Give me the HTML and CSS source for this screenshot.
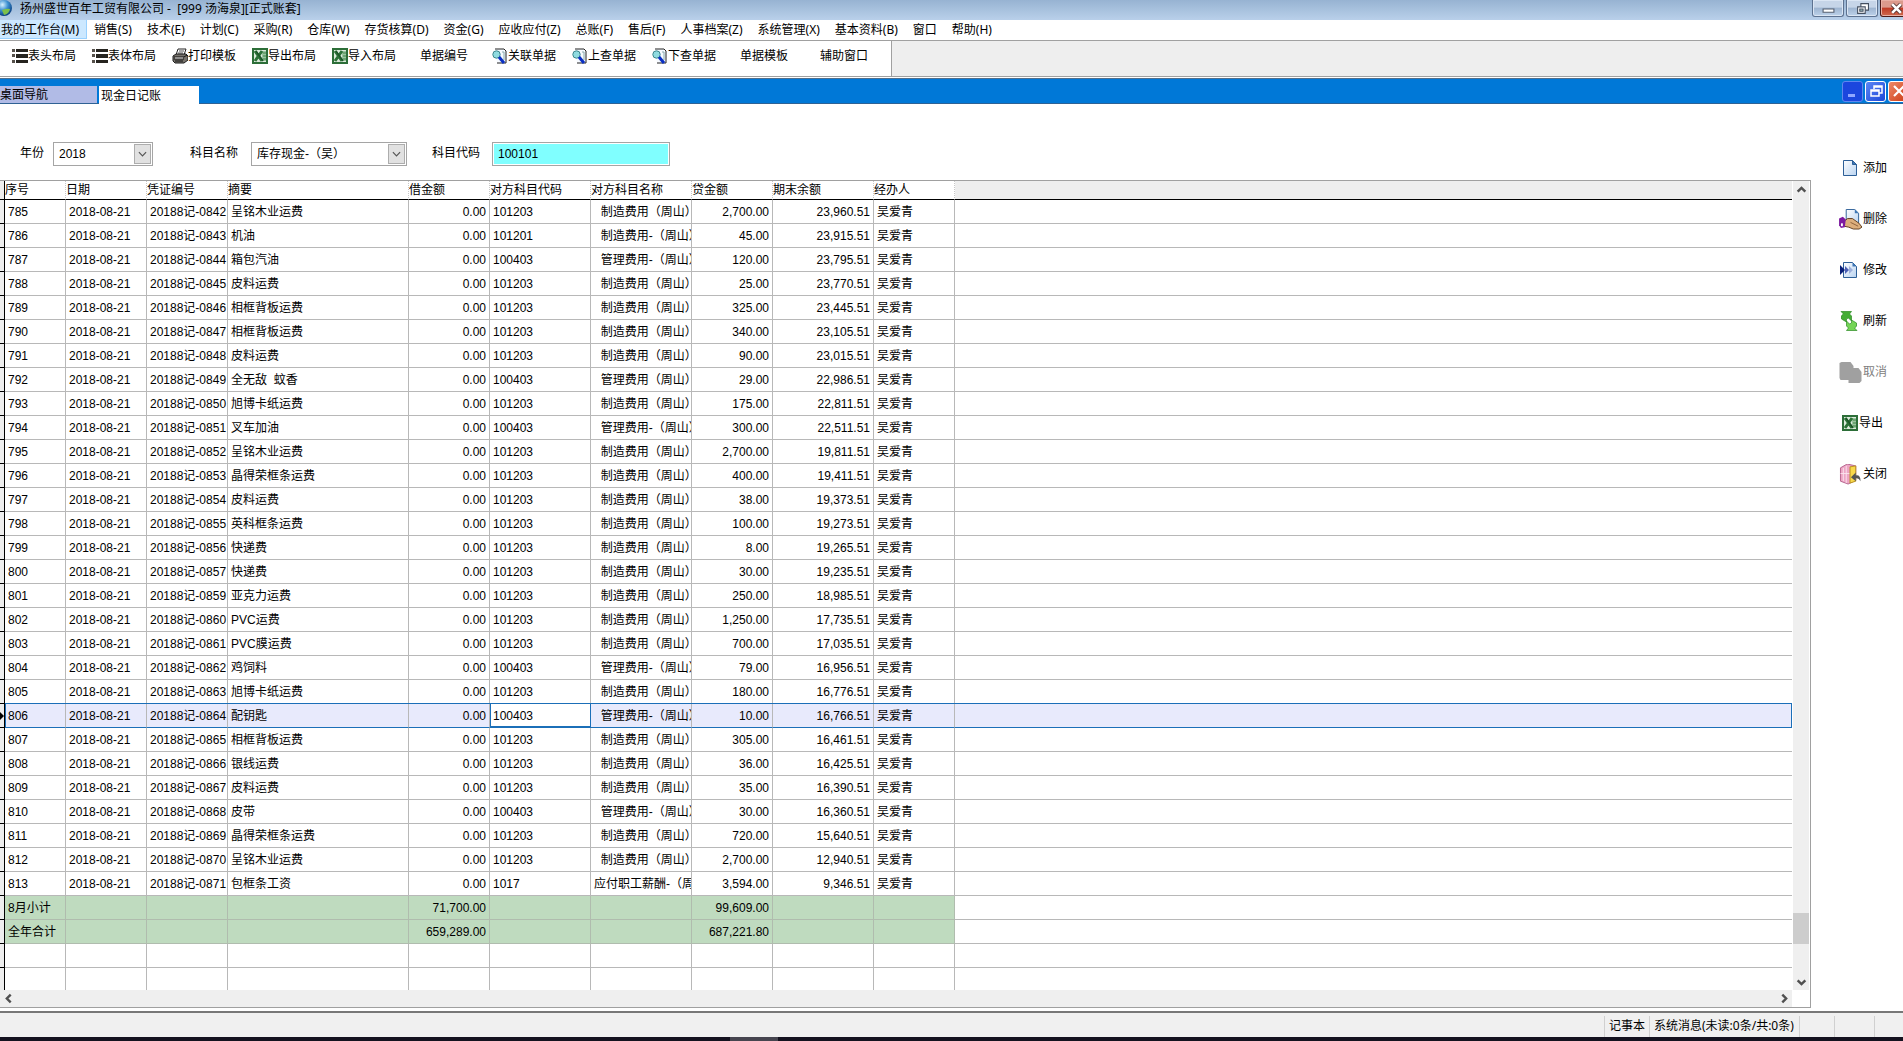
FILE: index.html
```html
<!DOCTYPE html>
<html lang="zh-CN">
<head>
<meta charset="utf-8">
<title>现金日记账</title>
<link rel="stylesheet" href="styles.css">
</head>
<body>
<svg class="defs" aria-hidden="true">
  <defs>
    <linearGradient id="paper" x1="0" y1="0" x2="1" y2="1"><stop offset="0" stop-color="#fff"/><stop offset="1" stop-color="#b9d3f0"/></linearGradient>
    <radialGradient id="globe" cx=".4" cy=".3" r=".7"><stop offset="0" stop-color="#d8f2ff"/><stop offset=".5" stop-color="#3b8fd0"/><stop offset="1" stop-color="#0a3f80"/></radialGradient>
    <symbol id="i-list" viewBox="0 0 16 16"><path d="M0 1h3v3H0zM0 6h3v3H0zM0 12h3v3H0z" fill="#55504a"/><path d="M4 1h12v3H4zM4 6h12v4H4zM4 12h12v3H4z" fill="#26241f"/></symbol>
    <symbol id="i-print" viewBox="0 0 16 16"><path d="M4 7 6 1h8l-2 6z" fill="#fff" stroke="#222"/><path d="M7 3h5M6 5h5" stroke="#555"/><path d="M1 8l3-2h10l2 2v4l-4 3H3l-2-2z" fill="#77736c" stroke="#1c1c1c"/><path d="M2 9h10l3-2M2 11h10M3 13h8" stroke="#111" fill="none"/><path d="M3 10h8" stroke="#ddd"/></symbol>
    <symbol id="i-excel" viewBox="0 0 16 16"><path fill="#2c6e38" d="M0 0h16v16H0z"/><path fill="#dcebdc" d="M2 2h12v12H2z"/><path d="M10 3h4v10h-4z" fill="#9cc49f"/><path d="M3 3l7 10M10 3L3 13" stroke="#2c7237" stroke-width="3"/><path d="M4 3l7 10" stroke="#1d5528" stroke-width="1.500"/><path d="M11 5h3M11 8h3M11 11h3" stroke="#3d8446"/></symbol>
    <symbol id="i-find" viewBox="0 0 16 16"><path d="M3 1h9l2 2v12H5" fill="#f6faff" stroke="#222"/><path d="M10 4h2v8" fill="none" stroke="#8aa"/><circle cx="4.500" cy="6.500" r="3.700" fill="#8fdbe0" stroke="#3d858c"/><path d="M7 9l5 6" stroke="#0a2fc4" stroke-width="3"/></symbol>
    <symbol id="i-page" viewBox="0 0 16 16"><path d="M1.500.5h9l4 4v11h-13z" fill="url(#paper)" stroke="#2d5f97"/><path d="M10.500.5v4h4z" fill="#3e77b5" stroke="#2d5f97"/></symbol>
    <symbol id="i-delete" viewBox="0 0 24 22"><path d="M7.500.5h9l4 4v11h-13z" fill="url(#paper)" stroke="#2d5f97"/><path d="M16.500.5v4h4z" fill="#3e77b5"/><path d="M5 13l4-3h5l7 5 3 4-3 2h-6l-5-2-5-1z" fill="#dcae7c" stroke="#5e3d20"/><path d="M12 14l8 4" stroke="#8a5f3a"/><path d="M0 10l4-2 3 3-1 8-4 1-2-3z" fill="#7d1aa0"/><path d="M2 15h2v3H2z" fill="#fff"/></symbol>
    <symbol id="i-edit" viewBox="0 0 18 16"><path d="M3.500.5h9l4 4v11h-13z" fill="url(#paper)" stroke="#2d5f97"/><path d="M12.500.5v4h4z" fill="#3e77b5"/><path d="M0 3l5 5-5 5z" fill="#0a1f78"/><path d="M5 4l4 4-4 4z" fill="#4a5fb4"/><path d="M9 4l4 4-4 4z" fill="#9db0dc"/></symbol>
    <symbol id="i-refresh" viewBox="0 0 17 20"><path d="M.5.5H11L9 3l2 2v5L8 7Q5 7 6 11L1 8Q0 4 3 3z" fill="#45ad35" stroke="#2b8a22" stroke-width=".7"/><path d="M16.500 19.500H6L8 17l-2-2v-5l3 3q3 0 2-4l5 3q1 4-2 5z" fill="#74d556" stroke="#2b8a22" stroke-width=".7"/></symbol>
    <symbol id="i-cancel" viewBox="0 0 22 21"><path d="M0 1l2-1h9l3 4v2h5l3 4v9l-2 2H9v-3H1l-1-2z" fill="#a0a0a0"/></symbol>
    <symbol id="i-close" viewBox="0 0 23 22"><path d="M1 4l7-4 9 2v15l-8 4-8-3z" fill="#eda5c4" stroke="#b5648d"/><path d="M4 4v14M7 2v18M1 10h10" stroke="#fbe3ee"/><path d="M11 3l6-1v16l-6 2z" fill="#f8d84a" stroke="#b8901f"/><path d="M22 18q0-7-5-6V9l-5 5 5 4v-3q3-1 5 3z" fill="#555"/></symbol>
    <symbol id="i-down" viewBox="0 0 10 6"><path d="M1 1l4 4 4-4" fill="none" stroke="#555" stroke-width="1.300"/></symbol>
    <symbol id="i-arrow" viewBox="0 0 10 10"><path d="M1.500 7L5 3.500 8.500 7" fill="none" stroke="#505050" stroke-width="2.200"/></symbol>
  </defs>
</svg>

<header class="titlebar">
  <svg class="globe" viewBox="0 0 16 16"><circle cx="8" cy="8" r="8" fill="url(#globe)"/><path d="M6 10q5-2 8-1-1 5-6 6z" fill="#7cc04a"/></svg>
  <h1 class="title">扬州盛世百年工贸有限公司 -&nbsp; [999 汤海泉][正式账套]</h1>
  <div class="window-buttons">
    <button class="win" aria-label="最小化"><svg viewBox="0 0 12 12"><path d="M1 6.500h10v3H1z" fill="#fff" stroke="#555f70"/></svg></button>
    <button class="win" aria-label="还原"><svg viewBox="0 0 12 12"><path d="M4.500 1.500h7v6h-7z" fill="#fff" stroke="#444f60"/><path d="M1.500 4.500h7v6h-7z" fill="#fff" stroke="#444f60"/><path d="M3.500 6.500h3v2h-3z" fill="#9bb" stroke="#444f60"/></svg></button>
    <button class="win win-close" aria-label="关闭窗口"><svg viewBox="0 0 12 12"><path d="M2 2l8 8M10 2l-8 8" stroke="#53302e" stroke-width="4"/><path d="M2 2l8 8M10 2l-8 8" stroke="#fff" stroke-width="2.500"/></svg></button>
  </div>
</header>

<nav class="menubar">
  <a class="active" href="#">我的工作台(M)</a><a href="#">销售(S)</a><a href="#">技术(E)</a><a href="#">计划(C)</a><a href="#">采购(R)</a><a href="#">仓库(W)</a><a href="#">存货核算(D)</a><a href="#">资金(G)</a><a href="#">应收应付(Z)</a><a href="#">总账(F)</a><a href="#">售后(F)</a><a href="#">人事档案(Z)</a><a href="#">系统管理(X)</a><a href="#">基本资料(B)</a><a href="#">窗口</a><a href="#">帮助(H)</a>
</nav>

<div class="toolbar">
  <div class="tools">
    <button><svg><use href="#i-list"/></svg>表头布局</button>
    <button><svg><use href="#i-list"/></svg>表体布局</button>
    <button><svg><use href="#i-print"/></svg>打印模板</button>
    <button><svg><use href="#i-excel"/></svg>导出布局</button>
    <button><svg><use href="#i-excel"/></svg>导入布局</button>
    <button>单据编号</button>
    <button><svg><use href="#i-find"/></svg>关联单据</button>
    <button><svg><use href="#i-find"/></svg>上查单据</button>
    <button><svg><use href="#i-find"/></svg>下查单据</button>
    <button>单据模板</button>
    <button>辅助窗口</button>
  </div>
</div>

<div class="tabbar">
  <a class="tab" href="#">桌面导航</a>
  <a class="tab current" href="#">现金日记账</a>
  <div class="mdi-buttons">
    <button class="mdi mdi-min" aria-label="最小化"><svg viewBox="0 0 16 16"><path d="M3 11h7v3H3z" fill="#8fa6ff"/></svg></button>
    <button class="mdi" aria-label="还原"><svg viewBox="0 0 16 16"><path d="M6 6V3h8v7h-3M6 4h8" fill="none" stroke="#fff" stroke-width="1.500"/><path d="M3 7h8v6H3zM3 8h8" fill="none" stroke="#fff" stroke-width="1.500"/></svg></button>
    <button class="mdi mdi-close" aria-label="关闭"><svg viewBox="0 0 16 16"><path d="M3 3l10 10M13 3L3 13" stroke="#fff" stroke-width="2.200"/></svg></button>
  </div>
</div>

<div class="workspace">
  <main class="main">
    <form class="filters">
      <div class="field year"><label for="year">年份</label><span class="select"><select id="year"><option>2018</option></select><svg><use href="#i-down"/></svg></span></div>
      <div class="field account"><label for="account">科目名称</label><span class="select"><select id="account"><option>库存现金-（吴）</option></select><svg><use href="#i-down"/></svg></span></div>
      <div class="field code"><label for="code">科目代码</label><input id="code" type="text" value="100101"></div>
    </form>

    <section class="grid">
      <div class="sheet">
        <table>
          <colgroup><col class="w-mark"><col class="w-no"><col class="w-s"><col class="w-s"><col class="w-memo"><col class="w-s"><col class="w-m"><col class="w-m"><col class="w-s"><col class="w-m"><col class="w-s"><col></colgroup>
          <thead><tr><th><th>序号<th>日期<th>凭证编号<th>摘要<th>借金额<th>对方科目代码<th>对方科目名称<th>贷金额<th>期末余额<th>经办人<th></tr></thead>
          <tbody>
<tr><td><td>785<td>2018-08-21<td>20188记-0842<td>呈铭木业运费<td>0.00<td>101203<td>&nbsp; 制造费用（周山）<td>2,700.00<td>23,960.51<td>吴爱青<td>
<tr><td><td>786<td>2018-08-21<td>20188记-0843<td>机油<td>0.00<td>101201<td>&nbsp; 制造费用-（周山）<td>45.00<td>23,915.51<td>吴爱青<td>
<tr><td><td>787<td>2018-08-21<td>20188记-0844<td>箱包汽油<td>0.00<td>100403<td>&nbsp; 管理费用-（周山）<td>120.00<td>23,795.51<td>吴爱青<td>
<tr><td><td>788<td>2018-08-21<td>20188记-0845<td>皮料运费<td>0.00<td>101203<td>&nbsp; 制造费用（周山）<td>25.00<td>23,770.51<td>吴爱青<td>
<tr><td><td>789<td>2018-08-21<td>20188记-0846<td>相框背板运费<td>0.00<td>101203<td>&nbsp; 制造费用（周山）<td>325.00<td>23,445.51<td>吴爱青<td>
<tr><td><td>790<td>2018-08-21<td>20188记-0847<td>相框背板运费<td>0.00<td>101203<td>&nbsp; 制造费用（周山）<td>340.00<td>23,105.51<td>吴爱青<td>
<tr><td><td>791<td>2018-08-21<td>20188记-0848<td>皮料运费<td>0.00<td>101203<td>&nbsp; 制造费用（周山）<td>90.00<td>23,015.51<td>吴爱青<td>
<tr><td><td>792<td>2018-08-21<td>20188记-0849<td>全无敌&nbsp; 蚊香<td>0.00<td>100403<td>&nbsp; 管理费用（周山）<td>29.00<td>22,986.51<td>吴爱青<td>
<tr><td><td>793<td>2018-08-21<td>20188记-0850<td>旭博卡纸运费<td>0.00<td>101203<td>&nbsp; 制造费用（周山）<td>175.00<td>22,811.51<td>吴爱青<td>
<tr><td><td>794<td>2018-08-21<td>20188记-0851<td>叉车加油<td>0.00<td>100403<td>&nbsp; 管理费用-（周山）<td>300.00<td>22,511.51<td>吴爱青<td>
<tr><td><td>795<td>2018-08-21<td>20188记-0852<td>呈铭木业运费<td>0.00<td>101203<td>&nbsp; 制造费用（周山）<td>2,700.00<td>19,811.51<td>吴爱青<td>
<tr><td><td>796<td>2018-08-21<td>20188记-0853<td>晶得荣框条运费<td>0.00<td>101203<td>&nbsp; 制造费用（周山）<td>400.00<td>19,411.51<td>吴爱青<td>
<tr><td><td>797<td>2018-08-21<td>20188记-0854<td>皮料运费<td>0.00<td>101203<td>&nbsp; 制造费用（周山）<td>38.00<td>19,373.51<td>吴爱青<td>
<tr><td><td>798<td>2018-08-21<td>20188记-0855<td>英科框条运费<td>0.00<td>101203<td>&nbsp; 制造费用（周山）<td>100.00<td>19,273.51<td>吴爱青<td>
<tr><td><td>799<td>2018-08-21<td>20188记-0856<td>快递费<td>0.00<td>101203<td>&nbsp; 制造费用（周山）<td>8.00<td>19,265.51<td>吴爱青<td>
<tr><td><td>800<td>2018-08-21<td>20188记-0857<td>快递费<td>0.00<td>101203<td>&nbsp; 制造费用（周山）<td>30.00<td>19,235.51<td>吴爱青<td>
<tr><td><td>801<td>2018-08-21<td>20188记-0859<td>亚克力运费<td>0.00<td>101203<td>&nbsp; 制造费用（周山）<td>250.00<td>18,985.51<td>吴爱青<td>
<tr><td><td>802<td>2018-08-21<td>20188记-0860<td>PVC运费<td>0.00<td>101203<td>&nbsp; 制造费用（周山）<td>1,250.00<td>17,735.51<td>吴爱青<td>
<tr><td><td>803<td>2018-08-21<td>20188记-0861<td>PVC膜运费<td>0.00<td>101203<td>&nbsp; 制造费用（周山）<td>700.00<td>17,035.51<td>吴爱青<td>
<tr><td><td>804<td>2018-08-21<td>20188记-0862<td>鸡饲料<td>0.00<td>100403<td>&nbsp; 管理费用-（周山）<td>79.00<td>16,956.51<td>吴爱青<td>
<tr><td><td>805<td>2018-08-21<td>20188记-0863<td>旭博卡纸运费<td>0.00<td>101203<td>&nbsp; 制造费用（周山）<td>180.00<td>16,776.51<td>吴爱青<td>
<tr class="current"><td><svg class="pointer" viewBox="0 0 4 8"><path d="M0 0l4 4-4 4z"/></svg><td>806<td>2018-08-21<td>20188记-0864<td>配钥匙<td>0.00<td class="focus">100403<td>&nbsp; 管理费用-（周山）<td>10.00<td>16,766.51<td>吴爱青<td>
<tr><td><td>807<td>2018-08-21<td>20188记-0865<td>相框背板运费<td>0.00<td>101203<td>&nbsp; 制造费用（周山）<td>305.00<td>16,461.51<td>吴爱青<td>
<tr><td><td>808<td>2018-08-21<td>20188记-0866<td>银线运费<td>0.00<td>101203<td>&nbsp; 制造费用（周山）<td>36.00<td>16,425.51<td>吴爱青<td>
<tr><td><td>809<td>2018-08-21<td>20188记-0867<td>皮料运费<td>0.00<td>101203<td>&nbsp; 制造费用（周山）<td>35.00<td>16,390.51<td>吴爱青<td>
<tr><td><td>810<td>2018-08-21<td>20188记-0868<td>皮带<td>0.00<td>100403<td>&nbsp; 管理费用-（周山）<td>30.00<td>16,360.51<td>吴爱青<td>
<tr><td><td>811<td>2018-08-21<td>20188记-0869<td>晶得荣框条运费<td>0.00<td>101203<td>&nbsp; 制造费用（周山）<td>720.00<td>15,640.51<td>吴爱青<td>
<tr><td><td>812<td>2018-08-21<td>20188记-0870<td>呈铭木业运费<td>0.00<td>101203<td>&nbsp; 制造费用（周山）<td>2,700.00<td>12,940.51<td>吴爱青<td>
<tr><td><td>813<td>2018-08-21<td>20188记-0871<td>包框条工资<td>0.00<td>1017<td>应付职工薪酬-（周山）<td>3,594.00<td>9,346.51<td>吴爱青<td>
<tr class="total"><td><td>8月小计<td><td><td><td>71,700.00<td><td><td>99,609.00<td><td><td>
<tr class="total"><td><td>全年合计<td><td><td><td>659,289.00<td><td><td>687,221.80<td><td><td>
<tr><td><td><td><td><td><td><td><td><td><td><td><td>
<tr><td><td><td><td><td><td><td><td><td><td><td><td>
          </tbody>
        </table>
      </div>
      <div class="vscroll">
        <button aria-label="向上滚动"><svg><use href="#i-arrow"/></svg></button>
        <div class="before"></div><div class="thumb"></div><div class="after"></div>
        <button class="down" aria-label="向下滚动"><svg><use href="#i-arrow"/></svg></button>
      </div>
      <div class="hscroll">
        <button class="left" aria-label="向左滚动"><svg><use href="#i-arrow"/></svg></button>
        <button class="right" aria-label="向右滚动"><svg><use href="#i-arrow"/></svg></button>
      </div>
    </section>
  </main>

  <aside class="actions">
    <button><svg class="i16"><use href="#i-page"/></svg>添加</button>
    <button><svg><use href="#i-delete"/></svg>删除</button>
    <button><svg class="i18"><use href="#i-edit"/></svg>修改</button>
    <button><svg class="i18"><use href="#i-refresh"/></svg>刷新</button>
    <button disabled><svg><use href="#i-cancel"/></svg>取消</button>
    <button class="export"><svg class="i16"><use href="#i-excel"/></svg>导出</button>
    <button><svg><use href="#i-close"/></svg>关闭</button>
  </aside>
</div>

<footer class="statusbar"><span class="note">记事本</span><span class="message">系统消息(未读:0条/共:0条)</span><span class="slot"></span><span class="slot wide"></span><span class="slot"></span></footer>
<div class="taskbar"><span></span></div>
</body>
</html>
```
FILE: styles.css
```css
* { box-sizing: border-box; }

body {
  display: flex;
  flex-direction: column;
  height: 100vh;
  margin: 0;
  overflow: hidden;
  background: #fff;
  color: #000;
  font: 12px/16px "Liberation Sans", "Noto Sans CJK SC", sans-serif;
}

button, input, select { font: inherit; color: inherit; }
button { display: flex; align-items: center; justify-content: center; padding: 0; border: 0; background: none; white-space: nowrap; }
a { color: inherit; text-decoration: none; }
svg { flex: none; }
.defs { position: absolute; width: 0; height: 0; }

.titlebar, .menubar, .statusbar { font-family: "Noto Sans", "Noto Sans CJK SC", sans-serif; }

.titlebar {
  display: flex;
  flex: none;
  height: 20px;
  background: linear-gradient(#97b3d2, #b9d0ea);
}
.globe { width: 16px; height: 16px; margin-left: -4px; }
.title { flex: 1; margin: 0 0 0 8px; font-size: 12px; font-weight: 400; line-height: 18px; }
.window-buttons { display: flex; gap: 2px; margin-right: -9px; }
.win {
  width: 32px;
  height: 17px;
  border: 1px solid #5d7290;
  border-top: 0;
  border-radius: 0 0 3px 3px;
  background: linear-gradient(#c6d5e8 45%, #9db4d0 50%, #bdd2ea);
  box-shadow: inset 0 0 0 1px #dbe6f4;
}
.win svg { width: 13px; height: 13px; }
.win-close { border-color: #4a1a18; background: linear-gradient(#dc9a8c 45%, #bf3a24 50%, #cf6a50); box-shadow: inset 0 0 0 1px #e8b0a4; }

.menubar { display: flex; flex: none; height: 21px; border-bottom: 1px solid #a0a0a0; }
.menubar a { height: 19px; padding: 0 8px 0 7px; line-height: 20px; }
.menubar .active { padding-left: 1px; background: #cce8ff; box-shadow: inset 0 -1px #99d1ff, inset -1px 0 #99d1ff; }

.toolbar { flex: none; height: 37px; border-bottom: 1px solid #fff; background: #eee; box-shadow: inset 0 -1px #a0a0a0; }
.tools { display: flex; width: 892px; height: 36px; padding: 0 7px 0 4px; border-right: 1px solid #a0a0a0; border-bottom: 1px solid #a0a0a0; background: #fff; }
.tools button { width: 80px; height: 30px; }
.tools svg { width: 16px; height: 16px; }

.tabbar { display: flex; flex: none; align-items: flex-end; gap: 2px; height: 26px; border-top: 1px solid #4f6f8f; border-bottom: 1px solid #2f6294; background: #0078d7; }
.tab { width: 97px; height: 17px; background: #b1bbe6; line-height: 18px; }
.tab.current { width: 100px; height: 18px; margin-bottom: -1px; padding-left: 2px; background: #fff; line-height: 20px; }
.mdi-buttons { display: flex; gap: 2px; align-self: center; margin: 0 -6px 0 auto; }
.mdi { width: 21px; height: 21px; border: 1px solid #fff; border-radius: 3px; background: linear-gradient(135deg, #5c86f4, #1c48da); }
.mdi svg { width: 16px; height: 16px; }
.mdi-min { border-color: #5f87ee; background: #1b46de; }
.mdi-close { background: linear-gradient(135deg, #ee8a68, #cc3a14); }

.workspace { display: flex; flex: 1; min-height: 0; }
.main { display: flex; flex: 1; flex-direction: column; min-width: 0; padding-bottom: 3px; }

.filters { display: flex; flex: none; height: 76px; padding: 38px 0 0 20px; }
.field { display: flex; gap: 9px; }
.field label { line-height: 22px; }
.year { width: 170px; }
.account { width: 242px; gap: 13px; }
.code { gap: 12px; }
.select { position: relative; width: 156px; }
.year .select { width: 100px; }
.select select, .field input { width: 100%; height: 24px; margin: 0; padding: 0 5px; border: 1px solid #a5a5a5; border-radius: 0; outline: 0; background: #fff; appearance: none; }
.select svg { position: absolute; top: 2px; right: 2px; width: 17px; height: 20px; padding: 6px 3px; border: 1px solid #adadad; background: #e1e1e1; pointer-events: none; }
.field input { width: 178px; background: #80ffff; box-shadow: inset 0 0 0 1px #fff; }

.grid { display: grid; flex: 1; grid-template: minmax(0, 1fr) 17px / minmax(0, 1fr) 16px; column-gap: 1px; min-height: 0; padding-right: 1px; border: 1px solid #a0a0a0; border-left: 0; }
.sheet { overflow: hidden; }
table { width: 100%; table-layout: fixed; border-collapse: separate; border-spacing: 0; }
.w-mark { width: 5px; }
.w-no { width: 61px; }
.w-s { width: 81px; }
.w-m { width: 101px; }
.w-memo { width: 181px; }
th, td { overflow: hidden; padding: 0 3px; border-right: 1px solid #b8b8b8; border-bottom: 1px solid #b8b8b8; line-height: 16px; text-align: left; white-space: nowrap; }
th { height: 19px; padding: 0; border-right: 1px dotted #c8c8c8; border-bottom: 1px solid #000; font-weight: 400; }
td { height: 24px; }
td:nth-child(6), td:nth-child(9), td:nth-child(10) { text-align: right; }
th:first-child, td:first-child { padding: 0; border-color: #000; border-right-style: solid; background: #eee; }
th:last-child { border-right: 0; background: #eee; }
td:last-child { border-right: 0; }
.pointer { display: block; width: 4px; height: 8px; }
.current td:not(:first-child) { border-bottom-color: #1b6fb8; background: #e8eafc; box-shadow: 0 -1px #1b6fb8; }
.current td:nth-child(2) { box-shadow: 0 -1px #1b6fb8, inset 1px 0 #1b6fb8; }
.current td:last-child { border-right: 1px solid #1b6fb8; }
.current td.focus { border-right-color: #1b6fb8; background: #fff; box-shadow: 0 -1px #1b6fb8, inset 1px 0 #1b6fb8, inset 0 -1px #1b6fb8; }
.total td:not(:first-child):not(:last-child) { border-color: #b0bcae; background: #bfdbbf; }

.vscroll { display: flex; flex-direction: column; background: #efefef; }
.vscroll button, .hscroll button { width: 16px; height: 16px; }
.vscroll svg, .hscroll svg { width: 11px; height: 11px; }
.before { flex: 717; }
.thumb { height: 31px; background: #cdcdcd; }
.after { flex: 30; }
.down svg { transform: rotate(180deg); }
.hscroll { display: flex; justify-content: space-between; background: #efefef; }
.left svg { transform: rotate(-90deg); }
.right svg { transform: rotate(90deg); }

.actions { display: flex; flex: none; flex-direction: column; gap: 25px; width: 92px; padding: 51px 16px 0 0; }
.actions button { justify-content: flex-end; gap: 1px; height: 26px; }
.actions svg { width: 23px; height: 21px; }
.actions .i16 { width: 16px; height: 16px; margin-right: 4px; }
.actions .i18 { width: 18px; height: 20px; margin-right: 4px; }
.actions .export { padding-right: 4px; }
.actions .export svg { margin-right: 0; }
.actions button:disabled { color: #808080; }

.statusbar { display: flex; flex: none; justify-content: flex-end; height: 26px; padding-top: 3px; border-top: 2px solid #777; background: #f0f0f0; line-height: 19px; }
.statusbar span { border-left: 1px solid #d0d0d0; padding-left: 4px; }
.statusbar .note { width: 45px; }
.statusbar .message { width: 150px; }
.statusbar .slot { width: 35px; }
.statusbar .wide { width: 40px; }
.statusbar .slot:last-child { width: 29px; }
.taskbar { display: flex; flex: none; justify-content: center; height: 4px; padding-right: 395px; background: #14121f; }
.taskbar span { width: 48px; background: #46454f; }
```
